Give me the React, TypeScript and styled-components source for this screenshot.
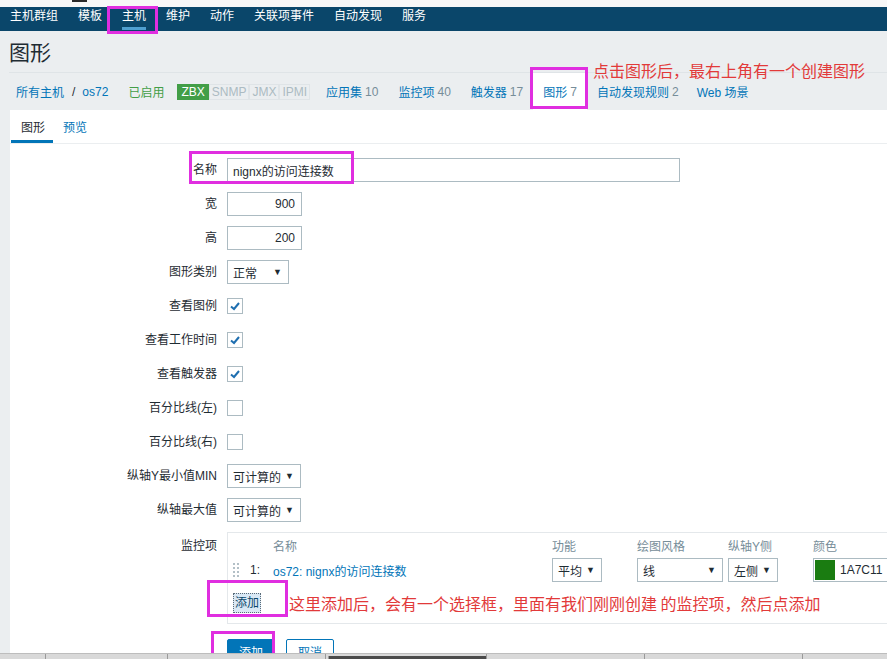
import React from "react"
import styled, { createGlobalStyle, css } from "styled-components"

const GlobalStyle = createGlobalStyle`
  html, body {
    margin: 0;
    padding: 0;
    overflow: hidden;
  }
  body {
    font-family: "Liberation Sans", Arial, "Noto Sans CJK SC", sans-serif;
    font-size: 12px;
    color: #1f2c33;
    background: #ebeef0;
  }
  * {
    box-sizing: border-box;
  }
`

const Frame = styled.div`
  width: 100vw;
  height: 100vh;
  display: flex;
  flex-direction: column;
  overflow: hidden;
  background: #ebeef0;
`

const TopStrip = styled.div`
  flex: none;
  height: 7px;
  display: flex;
  background: #f7f7f7;
`

const StripMark = styled.div`
  margin-left: 72px;
  width: 15px;
  height: 2px;
  background: #2a2a2a;
`

const NavBar = styled.nav`
  flex: none;
  height: 24px;
  display: flex;
  background: #0a466a;
`

const NavItem = styled.div<{ $active?: boolean }>`
  position: relative;
  padding: 1px 10px 0;
  line-height: 16px;
  color: #ffffff;
  white-space: nowrap;
  ${({ $active }) => $active && css`
    &::after {
      content: "";
      position: absolute;
      left: 10px;
      right: 10px;
      bottom: 1px;
      height: 3px;
      background: #4f9fd0;
    }
  `}
`

const Highlight = styled.div<{ $x: number; $y: number; $w: number; $h: number }>`
  position: absolute;
  left: ${({ $x }) => $x}px;
  top: ${({ $y }) => $y}px;
  width: ${({ $w }) => $w}px;
  height: ${({ $h }) => $h}px;
  border: 3px solid #e02ee0;
  pointer-events: none;
  z-index: 5;
`

const Note = styled.span`
  font-family: "Noto Sans CJK SC", sans-serif;
  font-size: 16px;
  line-height: 22px;
  color: #e23a3a;
  white-space: nowrap;
`

const TopNote = styled(Note)`
  position: absolute;
  left: 584px;
  top: 28px;
`

const Main = styled.main`
  flex: 1;
  min-height: 0;
  display: flex;
  flex-direction: column;
  padding-left: 9px;
`

const Header = styled.header`
  position: relative;
  flex: none;
`

const Title = styled.h1`
  margin: 0;
  padding: 10px 0 7px;
  font-size: 21px;
  line-height: 24px;
  font-weight: normal;
  color: #1f2c33;
  border-bottom: 1px solid #dfe4e7;
`

const HostNav = styled.div`
  display: flex;
  height: 37px;
  margin-left: -3px;
`

const HostNavItem = styled.div<{ $active?: boolean; $pl?: number; $pr?: number }>`
  position: relative;
  display: flex;
  align-items: center;
  padding: 0 ${({ $pr }) => $pr ?? 10}px 0 ${({ $pl }) => $pl ?? 10}px;
  white-space: nowrap;
  background: ${({ $active }) => ($active ? "#ffffff" : "transparent")};
`

const Link = styled.span`
  color: #0275b8;
`

const Count = styled.span`
  margin-left: 3px;
  color: #768d99;
`

const Crumb = styled.span`
  margin: 0 7px 0 8px;
  color: #1f2c33;
`

const Enabled = styled.span`
  color: #429e47;
`

const Tag = styled.span<{ $on?: boolean }>`
  display: inline-block;
  height: 16px;
  line-height: 14px;
  padding: 0 ${({ $on }) => ($on ? 3 : 2)}px;
  border: 1px solid ${({ $on }) => ($on ? "#429e47" : "#dfe4e7")};
  background: ${({ $on }) => ($on ? "#429e47" : "transparent")};
  color: ${({ $on }) => ($on ? "#ffffff" : "#acbbc2")};
`

const Card = styled.section`
  flex: 1;
  min-height: 0;
  margin-left: 1px;
  background: #ffffff;
  overflow: hidden;
`

const TabBar = styled.div`
  display: flex;
  height: 34px;
  border-bottom: 1px solid #ebeef0;
`

const Tab = styled.div<{ $active?: boolean }>`
  display: flex;
  align-items: center;
  padding: 3px 8px 0 10px;
  margin-left: ${({ $active }) => ($active ? 1 : 0)}px;
  color: ${({ $active }) => ($active ? "#1f2c33" : "#0275b8")};
  border-bottom: 3px solid ${({ $active }) => ($active ? "#0275b8" : "transparent")};
`

const Form = styled.div`
  position: relative;
  display: grid;
  grid-template-columns: 207px 1fr;
  grid-auto-rows: minmax(24px, auto);
  column-gap: 10px;
  row-gap: 10px;
  padding-top: 14px;
`

const Label = styled.div<{ $top?: boolean }>`
  text-align: right;
  line-height: 16px;
  white-space: nowrap;
  align-self: ${({ $top }) => ($top ? "start" : "center")};
  padding-top: ${({ $top }) => ($top ? 6 : 0)}px;
`

const TextField = styled.input<{ $w: number; $right?: boolean }>`
  width: ${({ $w }) => $w}px;
  height: 24px;
  margin: 0;
  padding: 0 6px 0 5px;
  border: 1px solid #acbbc2;
  font: inherit;
  color: #1f2c33;
  background: #ffffff;
  text-align: ${({ $right }) => ($right ? "right" : "left")};
  outline: none;
`

const SelectBox = styled.div<{ $w: number }>`
  width: ${({ $w }) => $w}px;
  height: 24px;
  align-self: center;
  display: flex;
  align-items: center;
  justify-content: space-between;
  padding: 0 6px 0 5px;
  border: 1px solid #acbbc2;
  background: #ffffff;
  white-space: nowrap;
`

const Arrow = styled.span`
  font-size: 9px;
  color: #1f2c33;
`

const CheckBox = styled.span`
  width: 16px;
  height: 16px;
  align-self: center;
  display: flex;
  align-items: center;
  justify-content: center;
  border: 1px solid #acbbc2;
  background: #ffffff;
`

const TableBox = styled.div`
  display: grid;
  grid-template-columns: 17px 23px 279px 85px 91px 85px auto;
  align-items: center;
  padding: 6px 0 9px 5px;
  border: 1px solid #e4e8eb;
  border-right: none;
`

const HeadCell = styled.div`
  line-height: 16px;
  color: #768d99;
  white-space: nowrap;
`

const RowCell = styled.div`
  margin-top: 3px;
  height: 24px;
  display: flex;
  align-items: center;
  white-space: nowrap;
`

const ColorField = styled.div`
  width: 110px;
  height: 24px;
  display: flex;
  align-items: center;
  gap: 5px;
  padding: 1px;
  border: 1px solid #acbbc2;
`

const Swatch = styled.span<{ $color: string }>`
  width: 20px;
  height: 20px;
  background: ${({ $color }) => $color};
`

const AddRow = styled.div`
  grid-column: 1 / -1;
  margin-top: 10px;
  display: flex;
  align-items: center;
  gap: 28px;
`

const AddLinkWrap = styled.div`
  position: relative;
`

const AddLink = styled.span`
  display: inline-block;
  line-height: 16px;
  padding: 1px 1px;
  border: 1px dotted #5a6b78;
  background: #d9e8f5;
  color: #0a466a;
`

const Buttons = styled.div`
  grid-column: 2;
  margin-top: 5px;
  display: flex;
  gap: 11px;
`

const ButtonWrap = styled.div`
  position: relative;
`

const Button = styled.button<{ $primary?: boolean }>`
  height: 24px;
  padding: 0 11px;
  font: inherit;
  border: 1px solid #0275b8;
  border-radius: 2px;
  background: ${({ $primary }) => ($primary ? "#0275b8" : "#ffffff")};
  color: ${({ $primary }) => ($primary ? "#ffffff" : "#0275b8")};
`

const BottomStrip = styled.div`
  flex: none;
  height: 6px;
  display: flex;
  align-items: flex-end;
  background: #d9d9d9;
  border-top: 1px solid #bdbdbd;
`

const StripSegment = styled.div<{ $w: number; $dark?: boolean; $first?: boolean }>`
  width: ${({ $w }) => $w}px;
  height: ${({ $dark }) => ($dark ? 3 : 5)}px;
  background: ${({ $dark }) => ($dark ? "#4b4b4b" : "transparent")};
  border-left: ${({ $first }) => ($first ? "none" : "1px solid #9a9a9a")};
`

const Check = () => (
  <svg width="12" height="12" viewBox="0 0 12 12">
    <polyline points="2,6.5 5,9 10,3" fill="none" stroke="#1f6fb0" strokeWidth="2" />
  </svg>
)

const DragHandle = () => (
  <svg width="7" height="14" viewBox="0 0 7 14">
    {[0, 1, 2, 3].map(r =>
      [0, 1].map(c => <rect key={`${r}-${c}`} x={c * 4} y={r * 4} width="2" height="2" fill="#b3c0c7" />)
    )}
  </svg>
)

const Select = ({ value, width }: { value: string; width: number }) => (
  <SelectBox $w={width}>
    <span>{value}</span>
    <Arrow>▼</Arrow>
  </SelectBox>
)

const menu = ["主机群组", "模板", "主机", "维护", "动作", "关联项事件", "自动发现", "服务"]

const checks: [string, boolean][] = [
  ["查看图例", true],
  ["查看工作时间", true],
  ["查看触发器", true],
  ["百分比线(左)", false],
  ["百分比线(右)", false],
]

export default function App() {
  return <Frame>
    <GlobalStyle/>
    <TopStrip><StripMark/></TopStrip>
    <NavBar>
      { menu.map(item =>
        <NavItem key={ item } $active={ item === "主机" }>
          { item }
          { item === "主机" && <Highlight $x={ -5 } $y={ -1 } $w={ 51 } $h={ 28 }/> }
        </NavItem>
      ) }
    </NavBar>
    <Main>
      <Header>
        <Title>图形</Title>
        <HostNav>
          <HostNavItem>
            <Link>所有主机</Link><Crumb>/</Crumb><Link>os72</Link>
          </HostNavItem>
          <HostNavItem $pr={ 3 }><Enabled>已启用</Enabled></HostNavItem>
          <HostNavItem $pl={ 10 } $pr={ 6 }>
            <Tag $on>ZBX</Tag><Tag>SNMP</Tag><Tag>JMX</Tag><Tag>IPMI</Tag>
          </HostNavItem>
          <HostNavItem><Link>应用集</Link><Count>10</Count></HostNavItem>
          <HostNavItem><Link>监控项</Link><Count>40</Count></HostNavItem>
          <HostNavItem><Link>触发器</Link><Count>17</Count></HostNavItem>
          <HostNavItem $active>
            <Link>图形</Link><Count>7</Count>
            <Highlight $x={ -3 } $y={ -6 } $w={ 58 } $h={ 42 }/>
          </HostNavItem>
          <HostNavItem><Link>自动发现规则</Link><Count>2</Count></HostNavItem>
          <HostNavItem $pl={ 8 }><Link>Web 场景</Link></HostNavItem>
        </HostNav>
        <TopNote>点击图形后，最右上角有一个创建图形</TopNote>
      </Header>
      <Card>
        <TabBar>
          <Tab $active>图形</Tab>
          <Tab>预览</Tab>
        </TabBar>
        <Form>
          <Highlight $x={ 179 } $y={ 7 } $w={ 165 } $h={ 33 }/>
          <Label>名称</Label>
          <TextField $w={ 453 } readOnly defaultValue="nignx的访问连接数"/>
          <Label>宽</Label>
          <TextField $w={ 75 } $right readOnly defaultValue="900"/>
          <Label>高</Label>
          <TextField $w={ 75 } $right readOnly defaultValue="200"/>
          <Label>图形类别</Label>
          <Select value="正常" width={ 62 }/>
          { checks.map(([label, checked]) =>
            <React.Fragment key={ label }>
              <Label>{ label }</Label>
              <CheckBox>{ checked && <Check/> }</CheckBox>
            </React.Fragment>
          ) }
          <Label>纵轴Y最小值MIN</Label>
          <Select value="可计算的" width={ 74 }/>
          <Label>纵轴最大值</Label>
          <Select value="可计算的" width={ 74 }/>
          <Label $top>监控项</Label>
          <TableBox>
            <HeadCell/>
            <HeadCell/>
            <HeadCell>名称</HeadCell>
            <HeadCell>功能</HeadCell>
            <HeadCell>绘图风格</HeadCell>
            <HeadCell>纵轴Y侧</HeadCell>
            <HeadCell>颜色</HeadCell>
            <RowCell><DragHandle/></RowCell>
            <RowCell>1:</RowCell>
            <RowCell><Link>os72: nignx的访问连接数</Link></RowCell>
            <RowCell><Select value="平均" width={ 50 }/></RowCell>
            <RowCell><Select value="线" width={ 86 }/></RowCell>
            <RowCell><Select value="左侧" width={ 50 }/></RowCell>
            <RowCell>
              <ColorField><Swatch $color="#1a7c11"/>1A7C11</ColorField>
            </RowCell>
            <AddRow>
              <AddLinkWrap>
                <AddLink>添加</AddLink>
                <Highlight $x={ -26 } $y={ -13 } $w={ 81 } $h={ 37 }/>
              </AddLinkWrap>
              <Note>这里添加后，会有一个选择框，里面有我们刚刚创建 的监控项，然后点添加</Note>
            </AddRow>
          </TableBox>
          <Buttons>
            <ButtonWrap>
              <Button $primary>添加</Button>
              <Highlight $x={ -16 } $y={ -8 } $w={ 64 } $h={ 40 }/>
            </ButtonWrap>
            <Button>取消</Button>
          </Buttons>
        </Form>
      </Card>
    </Main>
    <BottomStrip>
      <StripSegment $w={ 45 } $first/>
      <StripSegment $w={ 122 }/>
      <StripSegment $w={ 158 }/>
      <StripSegment $w={ 3 }/>
      <StripSegment $w={ 158 } $dark/>
      <StripSegment $w={ 158 }/>
      <StripSegment $w={ 158 }/>
      <StripSegment $w={ 82 }/>
    </BottomStrip>
  </Frame>
}
